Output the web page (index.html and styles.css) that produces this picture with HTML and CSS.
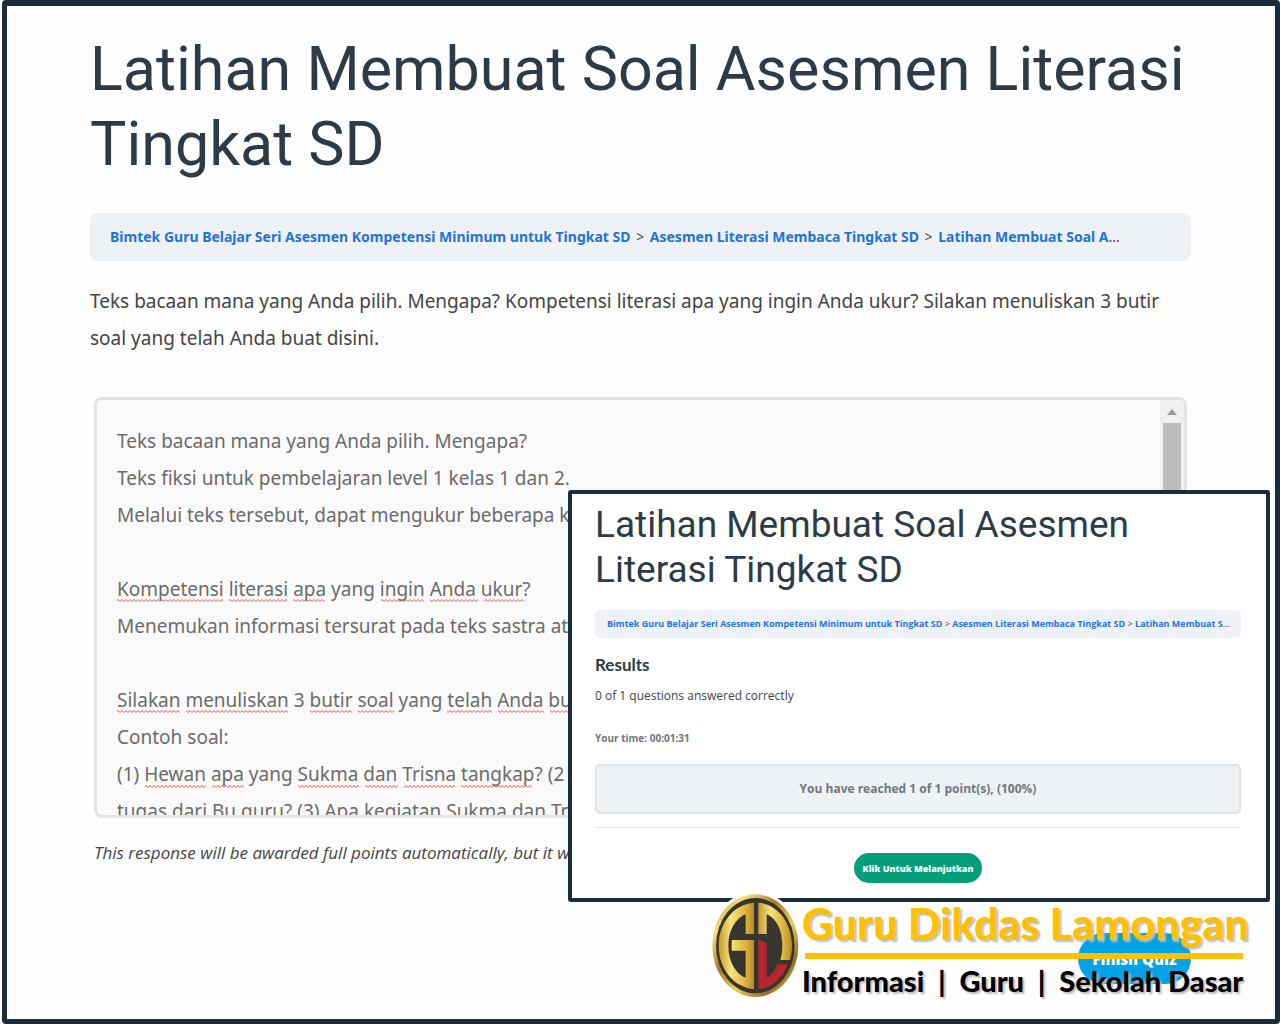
FILE: index.html
```html
<!DOCTYPE html>
<html lang="id">
<head>
<meta charset="utf-8">
<title>Latihan Membuat Soal Asesmen Literasi Tingkat SD</title>
<link rel="stylesheet" href="styles.css">
</head>
<body>
<div class="frame">
  <main class="quiz">
    <h1 class="title">Latihan Membuat Soal Asesmen Literasi Tingkat SD</h1>
    <nav class="crumbs">
      <a href="#">Bimtek Guru Belajar Seri Asesmen Kompetensi Minimum untuk Tingkat SD</a>
      <span class="sep">&gt;</span>
      <a href="#">Asesmen Literasi Membaca Tingkat SD</a>
      <span class="sep">&gt;</span>
      <a href="#">Latihan Membuat Soal A</a>...
    </nav>
    <label class="question" for="essay">Teks bacaan mana yang Anda pilih. Mengapa? Kompetensi literasi apa yang ingin Anda ukur? Silakan menuliskan 3 butir soal yang telah Anda buat disini.</label>
    <div class="answer">
      <textarea class="essay" id="essay" spellcheck="false">Teks bacaan mana yang Anda pilih. Mengapa?
Teks fiksi untuk pembelajaran level 1 kelas 1 dan 2.
Melalui teks tersebut, dapat mengukur beberapa k

Kompetensi literasi apa yang ingin Anda ukur?
Menemukan informasi tersurat pada teks sastra ata

Silakan menuliskan 3 butir soal yang telah Anda bu
Contoh soal:
(1) Hewan apa yang Sukma dan Trisna tangkap? (2
tugas dari Bu guru? (3) Apa kegiatan Sukma dan Tr</textarea>
      <div class="scrollbar" aria-hidden="true">
        <svg class="arrow" viewBox="0 0 10 6"><path d="M0 6L5 0l5 6z"/></svg>
        <div class="thumb"></div>
      </div>
      <svg class="squiggles" aria-hidden="true">
        <defs>
          <pattern id="wave" width="4" height="3" patternUnits="userSpaceOnUse"><path d="M-1 -.5L0 .5L2 2.5L4 .5L5 -.5" fill="none" stroke="#d9534f"/></pattern>
        </defs>
        <g fill="url(#wave)" transform="translate(1 1)">
          <rect x="19" y="198" width="106" height="3"/><rect x="131" y="198" width="58" height="3"/><rect x="195" y="198" width="32" height="3"/><rect x="283" y="198" width="43" height="3"/><rect x="332" y="198" width="48" height="3"/><rect x="386" y="198" width="40" height="3"/>
          <rect x="19" y="309" width="63" height="3"/><rect x="88" y="309" width="102" height="3"/><rect x="212" y="309" width="42" height="3"/><rect x="260" y="309" width="36" height="3"/><rect x="349" y="309" width="45" height="3"/><rect x="400" y="309" width="46" height="3"/><rect x="452" y="309" width="30" height="3"/>
          <rect x="47" y="384" width="61" height="3"/><rect x="114" y="384" width="32" height="3"/><rect x="200" y="384" width="61" height="3"/><rect x="267" y="384" width="33" height="3"/><rect x="306" y="384" width="51" height="3"/><rect x="363" y="384" width="71" height="3"/>
        </g>
      </svg>
    </div>
    <p class="note">This response will be awarded full points automatically, but it w</p>
    <button class="finish" type="button">Finish Quiz</button>
  </main>

  <section class="result">
    <h2 class="result-title">Latihan Membuat Soal Asesmen Literasi Tingkat SD</h2>
    <nav class="crumbs crumbs-small">
      <a href="#">Bimtek Guru Belajar Seri Asesmen Kompetensi Minimum untuk Tingkat SD</a> &gt;
      <a href="#">Asesmen Literasi Membaca Tingkat SD</a> &gt;
      <a href="#">Latihan Membuat S</a>...
    </nav>
    <h3 class="result-head">Results</h3>
    <p class="result-count">0 of 1 questions answered correctly</p>
    <p class="result-time">Your time: 00:01:31</p>
    <p class="points">You have reached 1 of 1 point(s), (100%)</p>
    <div class="actions"><button class="next" type="button">Klik Untuk Melanjutkan</button></div>
  </section>

  <aside class="brand">
    <svg class="logo" viewBox="36 42 261 309" role="img" aria-label="Logo GDL">
      <defs>
        <linearGradient id="rim" x1="0" y1="0" x2="1" y2="1">
          <stop offset="0" stop-color="#a8781e"/><stop offset=".2" stop-color="#f3e27a"/><stop offset=".4" stop-color="#a8782a"/><stop offset=".6" stop-color="#e8cf5c"/><stop offset=".8" stop-color="#9c6c25"/><stop offset="1" stop-color="#efdc76"/>
        </linearGradient>
        <linearGradient id="gold" x1="0" y1="0" x2="1" y2="0">
          <stop offset="0" stop-color="#c79a2c"/><stop offset=".35" stop-color="#f5e47c"/><stop offset=".75" stop-color="#dcb540"/><stop offset="1" stop-color="#b98a28"/>
        </linearGradient>
      </defs>
      <ellipse class="halo" cx="166" cy="197" rx="138" ry="163"/>
      <ellipse cx="166" cy="197" rx="129" ry="154" fill="url(#rim)"/>
      <ellipse cx="166" cy="197" rx="118" ry="143" fill="#38352f"/>
      <path fill="url(#gold)" d="M162 68V162H137V103C108 114 85 150 85 197C85 246 108 282 137 293V212H95V180H162V327C103 323 56 268 56 197C56 127 103 72 162 68z"/>
      <path fill="url(#gold)" d="M175 68C232 72 276 127 276 197Q276 220 270 240H241Q247 220 247 197C247 150 229 114 200 103V162H175z"/>
      <path fill="#b5272d" d="M175 180L200 188V293Q221 282 233 253H263C248 298 214 325 175 327z"/>
    </svg>
    <div class="brand-text">
      <p class="brand-name">Guru Dikdas Lamongan</p>
      <hr class="brand-rule">
      <p class="brand-tag">Informasi&nbsp; |&nbsp; Guru&nbsp; |&nbsp; Sekolah Dasar</p>
    </div>
  </aside>
</div>
</body>
</html>
```
FILE: styles.css
```css
* { box-sizing: border-box; }
body { margin: 0; background: #fff; font-family: "Open Sans", "Noto Sans", sans-serif; color: #444; }
h1, h2, h3, p { margin: 0; }
a { text-decoration: none; color: #1f74d8; }
button { border: 0; font-family: inherit; font-weight: 800; color: #fff; }

.frame { position: relative; min-height: 1024px; margin-left: 2px; border: 5px solid #1b2d3b; border-top-width: 6px; border-radius: 4px; background: #fefefe; }
.quiz { display: flex; flex-direction: column; padding: 26px 84px 35px 83px; }
.title { font: 400 61px/75px Roboto, sans-serif; color: #2d3b49; }
.crumbs { margin-top: 31px; padding: 0 20px; border-radius: 8px; background: #eef1f5; font-family: "Noto Sans", sans-serif; font-size: 14px; line-height: 48px; white-space: nowrap; overflow: hidden; }
.crumbs a { font-weight: 700; }
.sep { margin: 0 2px; }
.question { margin-top: 22px; font-family: "Noto Sans", sans-serif; font-size: 19px; line-height: 37px; color: #444; }

.answer { position: relative; display: flex; height: 421px; margin: 40px 4px 0; border: 3px solid #e2e4ea; border-radius: 8px; background: #fafafa; overflow: hidden; }
.essay { flex: 1; padding: 23px 20px 0; border: 0; outline: 0; resize: none; overflow: hidden; background: transparent; font-family: "Noto Sans", sans-serif; font-size: 19px; line-height: 37px; color: #6b6b6b; }
.scrollbar { display: flex; flex-direction: column; align-items: center; gap: 8px; width: 24px; padding-top: 9px; background: #f1f1f1; }
.arrow { width: 10px; height: 6px; fill: #9a9a9a; }
.thumb { width: 18px; height: 120px; background: #bdbdbd; }
.squiggles { position: absolute; inset: 0; width: 100%; height: 100%; pointer-events: none; }
.note { margin: 19px 4px 0; font-size: 17px; line-height: 32px; font-style: italic; color: #444; }
.finish { align-self: flex-end; width: 113px; height: 51px; margin-top: 64px; padding: 0; border-radius: 26px; background: #00a2e8; font-size: 15px; }

.result { position: absolute; top: 484px; right: 5px; width: 702px; padding: 8px 25px 15px 23px; border: 4px solid #1b2d3b; border-radius: 3px; background: #fff; }
.result-title { font: 400 37px/45px Roboto, sans-serif; color: #2d3b49; }
.crumbs-small { margin-top: 18px; padding: 0 12px; border-radius: 5px; font-family: "Open Sans", sans-serif; font-size: 9px; line-height: 28px; }
.result-head { margin-top: 15px; font: 700 17px/24px Lato, sans-serif; color: #2d3b49; }
.result-count { margin-top: 8px; font-size: 12px; line-height: 22px; }
.result-time { margin-top: 22px; font-size: 10px; line-height: 18px; font-weight: 700; color: #6f7780; }
.points { margin-top: 17px; border: 2px solid #e0e4e8; border-radius: 5px; background: #eef2f5; font-size: 12px; line-height: 46px; font-weight: 700; text-align: center; color: #6f7780; }
.actions { display: flex; justify-content: center; margin-top: 13px; padding-top: 25px; border-top: 1px solid #e4e6e8; }
.next { width: 128px; height: 30px; padding: 0; border-radius: 15px; background: #049f7a; font-size: 9px; }

.brand { position: absolute; right: 26px; bottom: 16px; display: flex; align-items: flex-start; }
.logo { width: 87px; height: 103px; margin-right: 3px; overflow: visible; }
.halo { fill: #fff; }
.brand-text { padding-top: 8px; font-family: Lato, sans-serif; font-weight: 900; white-space: nowrap; }
.brand-name { font-size: 43px; line-height: 44px; color: #ffc000; text-shadow: 2px 2px 2px #bbb; }
.brand-rule { height: 6px; margin: 7px 6px 0 3px; border: 0; background: #ffc000; }
.brand-tag { font-size: 29px; line-height: 44px; color: #000; text-shadow: 2px 2px 2px #bbb; }
```
